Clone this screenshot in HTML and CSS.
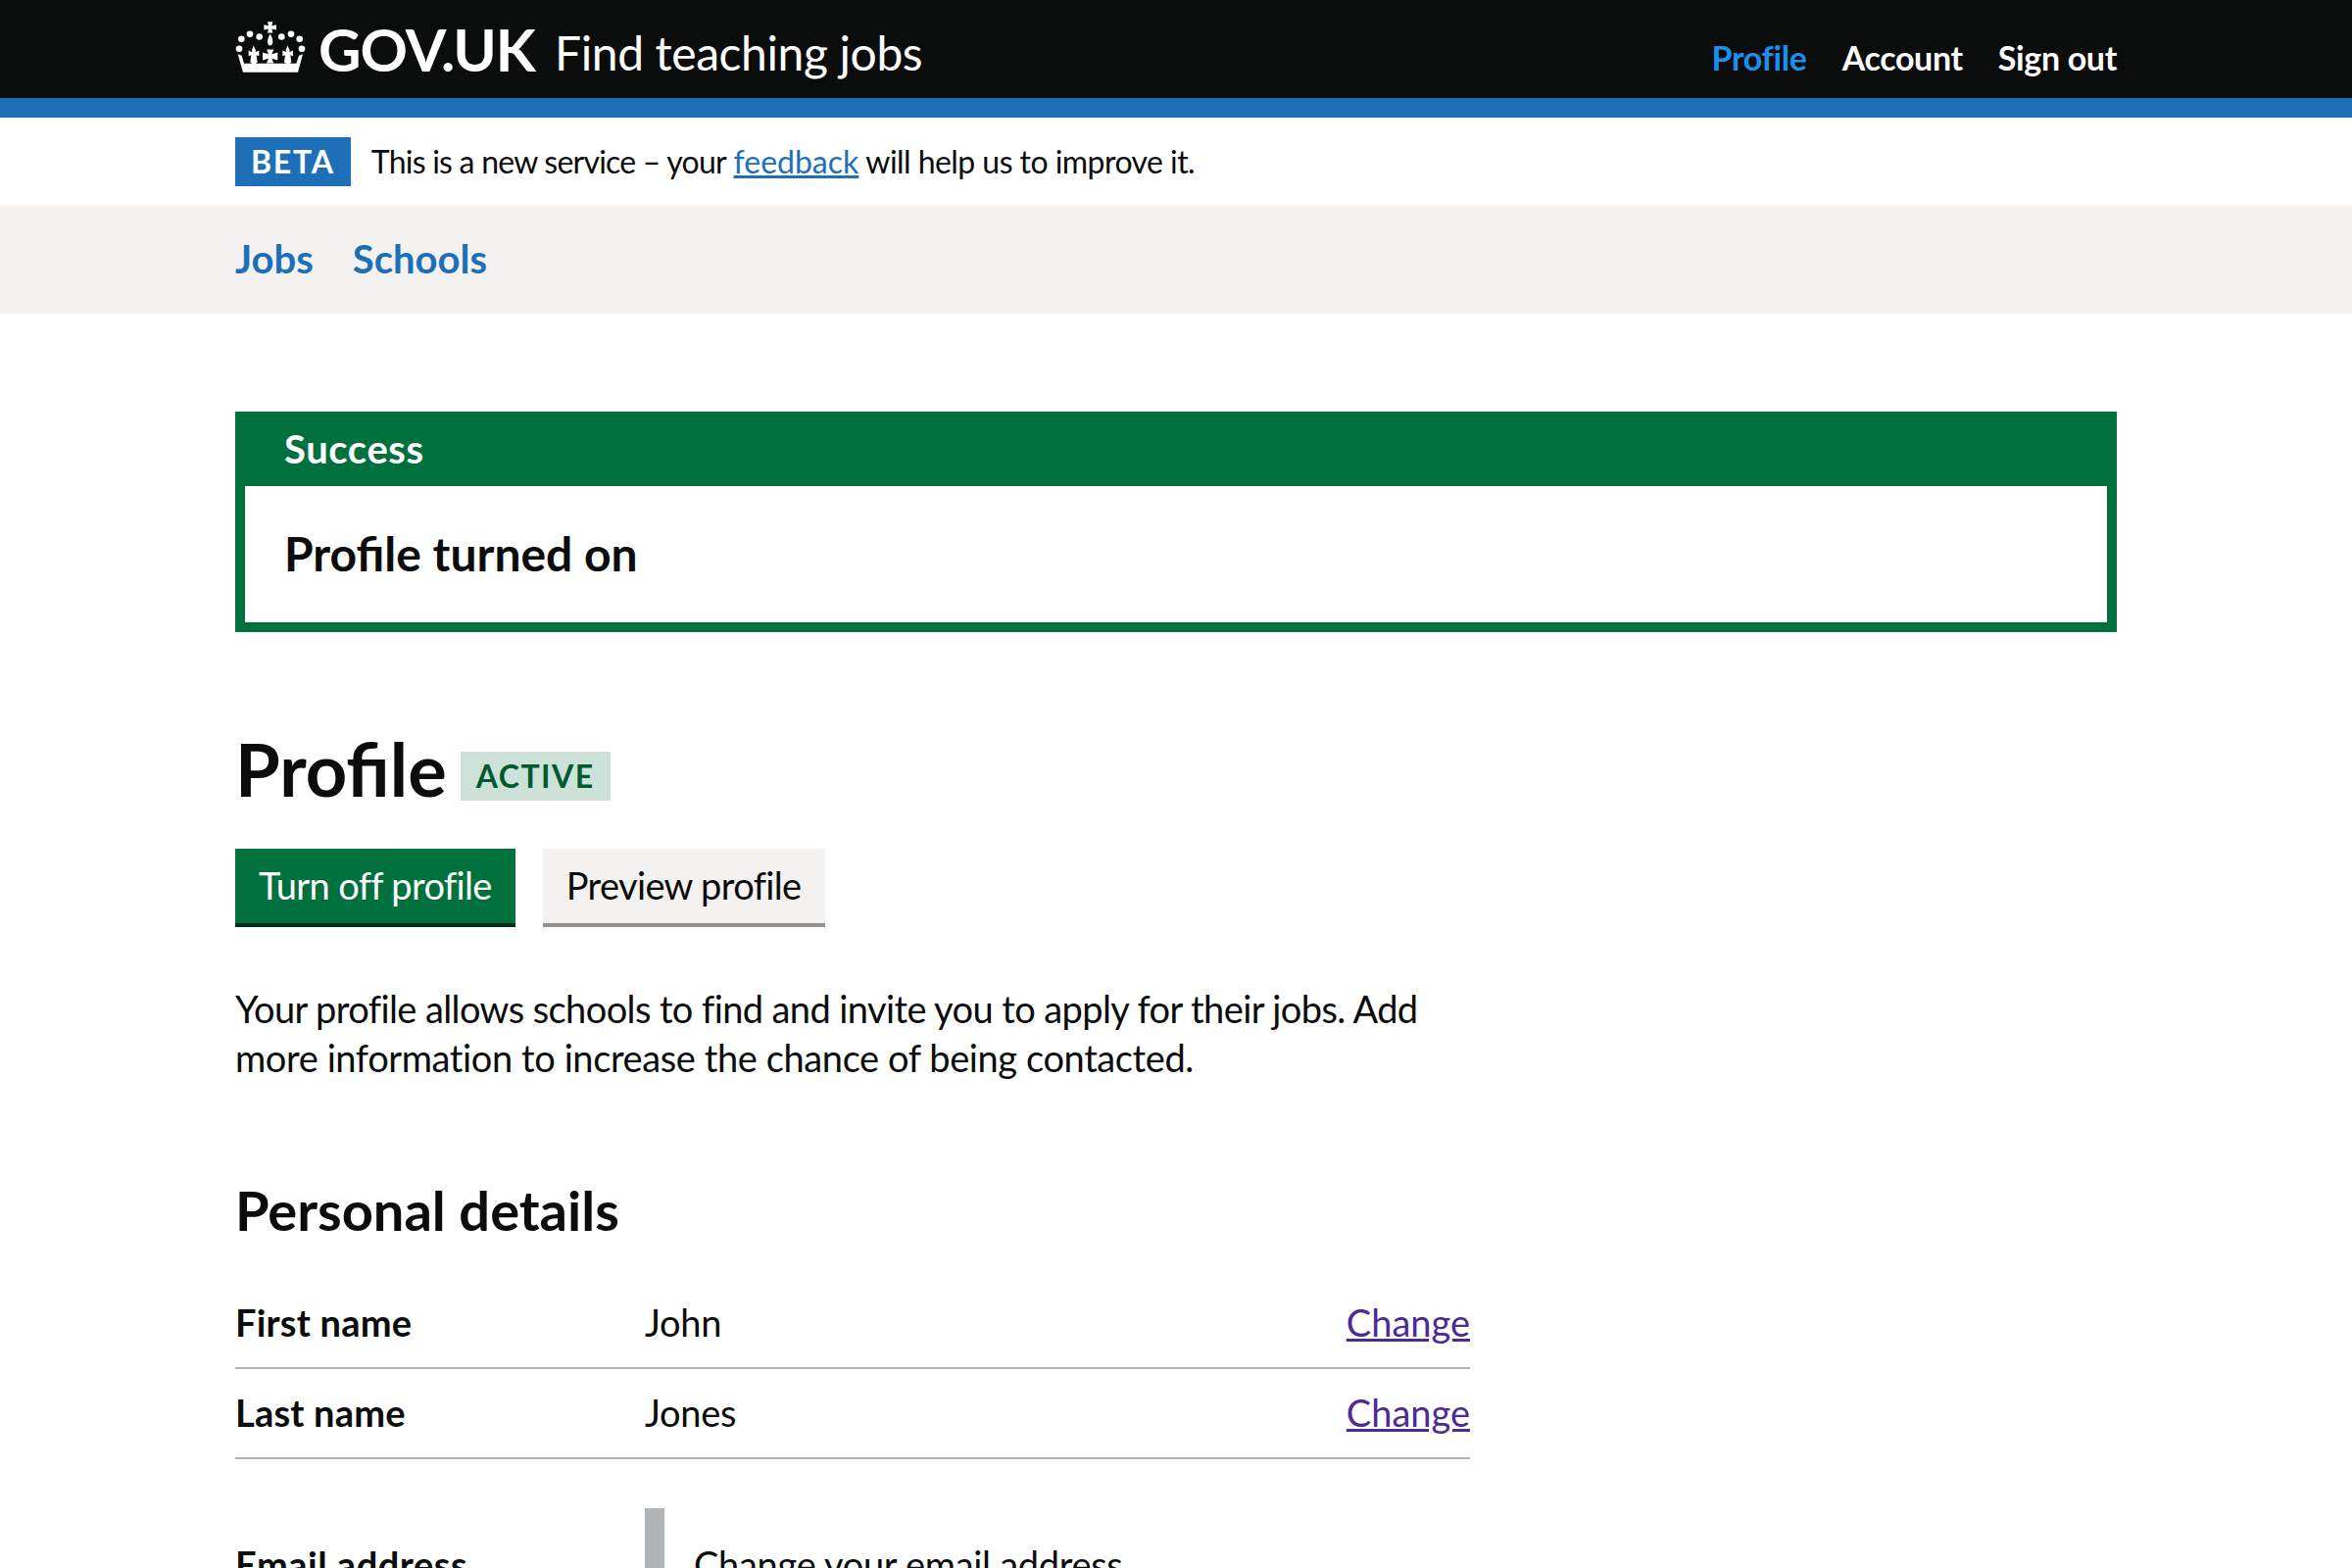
FILE: index.html
```html
<!DOCTYPE html>
<html lang="en">

<head>
  <meta charset="UTF-8">
  <meta name="viewport" content="width=device-width, initial-scale=1.0">
  <title>Profile - Find teaching jobs</title>
  <link rel="stylesheet" href="styles.css">
</head>

<body>
  <header class="site-header">
    <div class="container header-inner">
      <a class="logo" href="#">
        <svg class="crown" viewBox="30 35 216 155" aria-hidden="true">
          <g fill="#fff">
            <circle cx="42" cy="118" r="10" />
            <circle cx="49" cy="88" r="10" />
            <circle cx="75" cy="73" r="10" />
            <circle cx="104" cy="81" r="10" />
            <circle cx="172" cy="81" r="10" />
            <circle cx="201" cy="73" r="10" />
            <circle cx="227" cy="88" r="10" />
            <circle cx="234" cy="118" r="10" />
            <path d="M129 35h16l-3 12 14-3v16l-14-3 3 12h-16l3-12-14 3V44l14 3z" />
            <path d="M137 72c5 10 8 17 8 24 0 8-4 12-8 12s-8-4-8-12c0-7 3-14 8-24z" />
            <path d="M126 120h22l-6 14 18-5v24l-18-5 6 14h-22l6-14-18 5v-24l18 5z" />
            <path d="M86 108l7 14-1 6 11-5v17l-8-3 3 22-11 8-11-8 3-22-8 3v-17l11 5-1-6z" />
            <path d="M190 108l7 14-1 6 11-5v17l-8-3 3 22-11 8-11-8 3-22-8 3v-17l11 5-1-6z" />
            <path d="M38 134l12 5 7 24h160l8-24 12-5-15 56H54z" />
          </g>
        </svg>
        <span class="logo-text">GOV.UK</span>
      </a>
      <a class="service-name" href="#">Find teaching jobs</a>
      <nav class="account-nav">
        <a class="account-link account-link-active" href="#">Profile</a>
        <a class="account-link" href="#">Account</a>
        <a class="account-link" href="#">Sign out</a>
      </nav>
    </div>
  </header>
  <div class="header-rule"></div>

  <div class="container phase-banner">
    <strong class="phase-tag">BETA</strong>
    <span class="phase-text"><span class="phase-lead">This is a new service – your</span> <a class="link" href="#">feedback</a> will help us to improve it.</span>
  </div>

  <nav class="sub-nav">
    <div class="container sub-nav-inner">
      <a class="sub-nav-link" href="#">Jobs</a>
      <a class="sub-nav-link" href="#">Schools</a>
    </div>
  </nav>

  <main class="container main">
    <div class="banner">
      <h2 class="banner-title">Success</h2>
      <div class="banner-content">Profile turned on</div>
    </div>

    <div class="title-row">
      <h1 class="page-title">Profile</h1>
      <strong class="status-tag">ACTIVE</strong>
    </div>

    <div class="button-row">
      <a class="button button-green" href="#">Turn off profile</a>
      <a class="button button-grey" href="#">Preview profile</a>
    </div>

    <div class="two-thirds">
      <p class="intro">Your profile allows schools to find and invite you to apply for their jobs. Add <span class="intro-rest">more information to increase the chance of being contacted.</span></p>

      <h2 class="section-title">Personal details</h2>

      <dl class="summary">
        <div class="summary-row">
          <dt class="summary-key">First name</dt>
          <dd class="summary-value">John</dd>
          <dd class="summary-action"><a class="link-visited" href="#">Change</a></dd>
        </div>
        <div class="summary-row">
          <dt class="summary-key">Last name</dt>
          <dd class="summary-value">Jones</dd>
          <dd class="summary-action"><a class="link-visited" href="#">Change</a></dd>
        </div>
        <div class="summary-row summary-row-plain">
          <dt class="summary-key">Email address</dt>
          <dd class="inset">Change your email address</dd>
        </div>
      </dl>
    </div>
  </main>
</body>

</html>
```

FILE: styles.css
```css
html,
body {
  margin: 0;
  height: 1600px;
  overflow: hidden;
}

body {
  font-family: Lato, Arial, sans-serif;
  font-size: 38px;
  line-height: 50px;
  color: #0b0c0c;
  background-color: #fff;
}

a {
  text-decoration: none;
}

.container {
  width: 1920px;
  margin: 0 auto;
}

.site-header {
  height: 100px;
  background-color: #0b0c0c;
}

.header-inner {
  display: flex;
  align-items: flex-start;
  height: 100px;
}

.logo {
  display: flex;
  align-items: flex-start;
  color: #fff;
}

.crown {
  width: 72px;
  height: 52px;
  margin-top: 22px;
}

.logo-text {
  margin-left: 13px;
  font-size: 60px;
  line-height: 100px;
  font-weight: 700;
  letter-spacing: -1px;
}

.service-name {
  margin-left: 20px;
  margin-top: 4px;
  font-size: 48px;
  line-height: 100px;
  letter-spacing: -0.4px;
  color: #fff;
}

.account-nav {
  display: flex;
  gap: 36px;
  margin-left: auto;
  margin-top: 34px;
}

.account-link {
  font-size: 34px;
  line-height: 50px;
  font-weight: 700;
  letter-spacing: -0.35px;
  color: #fff;
}

.account-link-active {
  color: #1d8feb;
}

.header-rule {
  height: 20px;
  background-color: #1d70b8;
}

.phase-banner {
  display: flex;
  align-items: center;
  gap: 21px;
  height: 90px;
  font-size: 32px;
}

.phase-tag {
  padding: 0 16px;
  height: 50px;
  line-height: 50px;
  font-size: 32px;
  letter-spacing: 1.8px;
  color: #fff;
  background-color: #1d70b8;
}

.phase-text {
  letter-spacing: -0.55px;
}

.phase-lead {
  letter-spacing: -0.77px;
}

.link {
  color: #1d70b8;
  text-decoration: underline;
  letter-spacing: 0;
}

.sub-nav {
  height: 110px;
  background-color: #f3f2f1;
}

.sub-nav-inner {
  display: flex;
  gap: 40px;
}

.sub-nav-link {
  font-size: 40px;
  line-height: 108px;
  font-weight: 700;
  color: #1d70b8;
}

.main {
  padding-top: 100px;
}

.banner {
  border: 10px solid #00703c;
  background-color: #00703c;
}

.banner-title {
  margin: 0;
  padding-left: 40px;
  height: 66px;
  font-size: 40px;
  line-height: 56px;
  font-weight: 700;
  letter-spacing: 0.6px;
  color: #fff;
}

.banner-content {
  padding: 39px 40px 41px;
  height: 59px;
  font-size: 48px;
  line-height: 59px;
  font-weight: 700;
  background-color: #fff;
}

.title-row {
  display: flex;
  align-items: flex-start;
  margin-top: 100px;
}

.page-title {
  margin: 0;
  font-size: 74px;
  line-height: 80px;
  font-weight: 700;
}

.status-tag {
  margin-left: 14px;
  margin-top: 22px;
  padding: 0 16px;
  height: 50px;
  line-height: 50px;
  font-size: 32px;
  letter-spacing: 1.5px;
  color: #005a30;
  background-color: #cce2d8;
}

.button-row {
  display: flex;
  gap: 28px;
  margin-top: 41px;
}

.button {
  display: block;
  height: 76px;
  padding: 0 24px;
  font-size: 38px;
  line-height: 75px;
  letter-spacing: -0.65px;
}

.button-green {
  color: #fff;
  background-color: #00703c;
  box-shadow: 0 4px 0 #002d18;
}

.button-grey {
  color: #0b0c0c;
  background-color: #f3f2f1;
  box-shadow: 0 4px 0 #929191;
}

.two-thirds {
  width: 1260px;
}

.intro {
  margin: 62px 0 0;
  letter-spacing: -0.6px;
}

.intro-rest {
  letter-spacing: -0.4px;
}

.section-title {
  margin: 98px 0 0;
  font-size: 56px;
  line-height: 65px;
  font-weight: 700;
}

.summary {
  margin: 38px 0 0;
}

.summary-row {
  display: flex;
  align-items: center;
  box-sizing: border-box;
  height: 92px;
  padding-bottom: 2px;
  border-bottom: 2px solid #b1b4b6;
}

.summary-row-plain {
  align-items: flex-start;
  height: auto;
  margin-top: 50px;
  padding-bottom: 0;
  border-bottom: 0;
}

.summary-key {
  width: 418px;
  font-weight: 700;
  letter-spacing: 0.2px;
}

.summary-row-plain .summary-key {
  padding-top: 32px;
  letter-spacing: 0.5px;
}

.summary-value {
  flex: 1;
  margin: 0;
  letter-spacing: -0.3px;
}

.summary-action {
  margin: 0;
}

.link-visited {
  color: #4c2c92;
  text-decoration: underline;
}

.inset {
  margin: 0;
  padding: 32px 0 30px 30px;
  border-left: 20px solid #b1b4b6;
  letter-spacing: -0.3px;
}
```
